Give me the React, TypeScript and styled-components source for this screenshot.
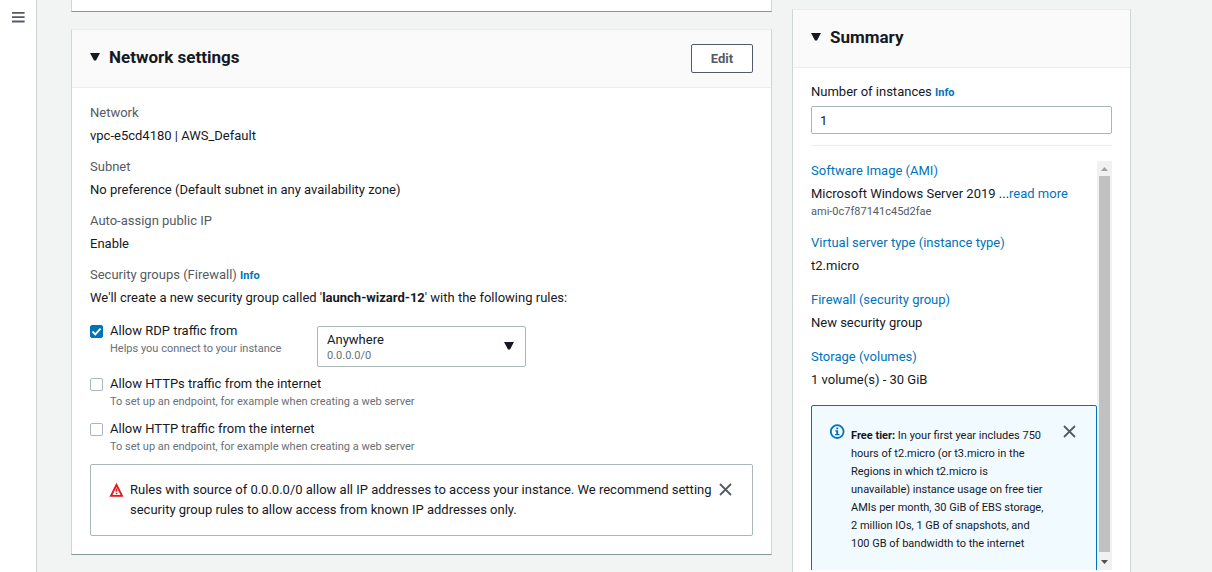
import React, { useState } from "react";
import styled, { createGlobalStyle, css } from "styled-components";

const ink = "#16191f";
const slate = "#545b64";
const muted = "#687078";
const blue = "#0073bb";
const line = "#eaeded";
const control = "#aab7b8";

const GlobalStyle = createGlobalStyle`
  *, *::before, *::after { box-sizing: border-box; }
  body {
    margin: 0;
    background: #f2f3f3;
    color: ${ink};
    font-family: Roboto, "Noto Sans", sans-serif;
    font-size: 13px;
    line-height: 20px;
  }
  h2, p, dl, dd, dt { margin: 0; }
  button, input, select { font: inherit; color: inherit; }
`;

const Page = styled.div`
  display: flex;
  height: 100vh;
  overflow: hidden;
`;

const Rail = styled.nav`
  flex: none;
  width: 37px;
  padding: 10px 0 0 11px;
  background: #fff;
  border-right: 1px solid #d0d4d6;
`;

const IconButton = styled.button`
  display: flex;
  flex: none;
  align-self: flex-start;
  padding: 0;
  border: 0;
  background: none;
  color: ${slate};
  cursor: pointer;
`;

const DismissButton = styled(IconButton)`
  margin-top: 3px;
`;

const Content = styled.main`
  flex: 1;
  display: grid;
  grid-template-columns: minmax(0, 701fr) minmax(0, 339fr);
  column-gap: 20px;
  padding: 0 81px 0 34px;
`;

const Column = styled.div`
  display: flex;
  flex-direction: column;
  gap: 17px;
`;

const Card = styled.section`
  background: #fff;
  border: 1px solid #d0d5d6;
  border-top-color: ${line};
  border-bottom-color: #879596;
`;

const PreviousCard = styled(Card)`
  height: 12px;
  border-top: 0;
`;

const SummaryCard = styled(Card)`
  display: flex;
  flex-direction: column;
  min-height: 0;
  margin-top: 9px;
  border-bottom: 0;
`;

const CardHeader = styled.header`
  display: flex;
  align-items: center;
  justify-content: space-between;
  height: 58px;
  flex: none;
  padding: 0 18px;
  background: #fafafa;
  border-bottom: 1px solid ${line};
`;

const Heading = styled.div`
  display: flex;
  align-items: center;
  gap: 9px;
  padding-bottom: 3px;
`;

const Title = styled.h2`
  font-size: 17px;
  line-height: 22px;
  font-weight: 700;
`;

const OutlineButton = styled.button`
  height: 29px;
  width: 62px;
  padding: 0;
  border: 1px solid ${slate};
  border-radius: 2px;
  background: #fff;
  color: ${slate};
  font-weight: 700;
  cursor: pointer;
`;

const CardBody = styled.div`
  padding: 15px 18px 18px;
`;

const SummaryBody = styled.div`
  display: flex;
  flex: 1;
  flex-direction: column;
  min-height: 0;
  padding: 14px 18px 2px;
`;

const Details = styled.dl<{ $gap: number }>`
  display: flex;
  flex-direction: column;
  gap: ${(p) => p.$gap}px;
`;

const Term = styled.dt`
  margin-bottom: 3px;
  color: ${slate};
`;

const Small = styled.span<{ $color?: string }>`
  display: block;
  font-size: 11px;
  line-height: 15px;
  color: ${(p) => p.$color ?? muted};
`;

const Link = styled.a`
  color: ${blue};
  text-decoration: none;
`;

const InfoLink = styled(Link)`
  font-size: 11px;
  line-height: 11px;
  font-weight: 700;
`;

const Rules = styled.div`
  display: flex;
  flex-direction: column;
  gap: 7px;
  margin: 13px 0 7px;
`;

const Rule = styled.div`
  display: flex;
  min-height: 38px;
`;

const RuleLabel = styled.label`
  display: flex;
  gap: 7px;
  min-width: 227px;
`;

const Tick = styled.span`
  display: grid;
  flex: none;
  height: 13px;
  margin-top: 4px;
  > * { grid-area: 1 / 1; }
  > svg { pointer-events: none; }
`;

const TickInput = styled.input`
  appearance: none;
  width: 13px;
  height: 13px;
  margin: 0;
  border: 1px solid ${control};
  border-radius: 2px;
  background: #fff;
  &:checked {
    border-color: ${blue};
    background: ${blue};
  }
`;

const Picker = styled.div`
  position: relative;
  width: 209px;
  margin-top: 5px;
  > svg {
    position: absolute;
    top: 16px;
    right: 12px;
    pointer-events: none;
  }
`;

const PickerSelect = styled.select`
  display: block;
  appearance: none;
  width: 100%;
  height: 41px;
  padding: 0 32px 14px 9px;
  border: 1px solid ${control};
  border-radius: 2px;
  background: #fff;
`;

const PickerNote = styled(Small)`
  position: absolute;
  left: 10px;
  bottom: 4px;
  pointer-events: none;
`;

const alertTone = {
  plain: css`
    padding: 15px 20px 15px 18px;
    border: 1px solid ${control};
    background: #fff;
  `,
  info: css`
    padding: 16px 20px 19px 18px;
    border: 1px solid ${blue};
    background: #f1faff;
    font-size: 11px;
    line-height: 18px;
  `,
};

const Alert = styled.div<{ $tone: keyof typeof alertTone }>`
  display: flex;
  gap: 6px;
  border-radius: 2px;
  ${(p) => alertTone[p.$tone]}
  > svg { flex: none; }
`;

const AlertText = styled.p`
  flex: 1;
`;

const FreeTierText = styled(AlertText)`
  padding: 5px 12px 0 0;
`;

const NumberInput = styled.input`
  display: block;
  width: 100%;
  height: 28px;
  margin-top: 4px;
  padding: 0 8px;
  border: 1px solid ${control};
  border-radius: 2px;
  background: #fff;
`;

const Divider = styled.hr`
  width: 100%;
  margin: 11px 0 15px;
  border: 0;
  border-top: 1px solid ${line};
`;

const ScrollRegion = styled.div`
  display: flex;
  flex: 1;
  min-height: 0;
`;

const ScrollContent = styled.div`
  flex: 1;
  min-width: 0;
  overflow: hidden;
`;

const FreeTier = styled(Alert)`
  margin-top: 15px;
  min-height: 200px;
`;

const ScrollBar = styled.div`
  display: flex;
  flex-direction: column;
  flex: none;
  width: 15px;
  background: #f1f1f1;
`;

const ScrollThumb = styled.div`
  flex: 1;
  margin: 0 2px 3px;
  background: #c1c1c1;
`;

const Caret = () => (
  <svg width="10" height="8" viewBox="0 0 10 8" aria-hidden="true">
    <path d="M0 0H10L6 7.6H4Z" fill={ink} />
  </svg>
);

const Menu = () => (
  <svg width="14" height="14" viewBox="0 0 14 14" aria-hidden="true">
    <path d="M1 2.9H13.6M1 7.1H13.6M1 11.5H13.6" stroke={slate} strokeWidth="1.9" />
  </svg>
);

const Close = () => (
  <svg width="13" height="13" viewBox="0 0 13 13" aria-hidden="true">
    <path d="M1 1L12 12M12 1L1 12" stroke={slate} strokeWidth="1.8" />
  </svg>
);

const Warning = () => (
  <svg width="15" height="20" viewBox="0 0 15 20" aria-hidden="true">
    <path d="M7.5 4.8L13 15.9H2Z" fill="none" stroke="#e8151b" strokeWidth="1.9" />
    <path d="M7.5 8.4V11.8M7.5 12.8V14.2" stroke="#e8151b" strokeWidth="1.6" />
  </svg>
);

const InfoMark = () => (
  <svg width="15" height="20" viewBox="0 0 15 20" aria-hidden="true">
    <circle cx="7.2" cy="9.6" r="6.4" fill="none" stroke={blue} strokeWidth="1.8" />
    <path d="M6.3 5.6H8.2V7.2H6.3ZM5.2 8.3H8.2V11.9H9.5V13.3H5V11.9H6.3V9.6H5.2Z" fill={blue} />
  </svg>
);

const ScrollArrow = ({ up, color }: { up?: boolean; color: string }) => (
  <svg width="15" height="15" viewBox="0 0 15 15" aria-hidden="true">
    <path d={up ? "M4 10H11L7.5 6Z" : "M4 5H11L7.5 9Z"} fill={color} />
  </svg>
);

type TrafficRuleProps = {
  label: string;
  hint: string;
  initial?: boolean;
  children?: React.ReactNode;
};

function TrafficRule({ label, hint, initial = false, children }: TrafficRuleProps) {
  const [on, setOn] = useState(initial);
  return (
    <Rule>
      <RuleLabel>
        <Tick>
          <TickInput type="checkbox" checked={on} onChange={() => setOn(!on)} />
          {on && (
            <svg width="13" height="13" viewBox="0 0 13 13" aria-hidden="true">
              <path d="M2.5 6.5L5.3 9.3L10.6 3.6" fill="none" stroke="#fff" strokeWidth="1.9" />
            </svg>
          )}
        </Tick>
        <span>
          {label}
          <Small>{hint}</Small>
        </span>
      </RuleLabel>
      {children}
    </Rule>
  );
}

const network = [
  ["Network", "vpc-e5cd4180 | AWS_Default"],
  ["Subnet", "No preference (Default subnet in any availability zone)"],
  ["Auto-assign public IP", "Enable"],
];

const summary = [
  ["Virtual server type (instance type)", "t2.micro"],
  ["Firewall (security group)", "New security group"],
  ["Storage (volumes)", "1 volume(s) - 30 GiB"],
];

export default function App() {
  const [count, setCount] = useState("1");
  return (
    <>
      <GlobalStyle />
      <Page>
        <Rail>
          <IconButton aria-label="Open navigation"><Menu /></IconButton>
        </Rail>
        <Content>
          <Column>
            <PreviousCard />
            <Card>
              <CardHeader>
                <Heading>
                  <Caret />
                  <Title>Network settings</Title>
                </Heading>
                <OutlineButton>Edit</OutlineButton>
              </CardHeader>
              <CardBody>
                <Details $gap={11}>
                  {network.map(([term, value]) => (
                    <div key={term}>
                      <Term>{term}</Term>
                      <dd>{value}</dd>
                    </div>
                  ))}
                  <div>
                    <Term>Security groups (Firewall) <InfoLink href="#security">Info</InfoLink></Term>
                    <dd>
                      We'll create a new security group called '<b>launch-wizard-12</b>' with the following rules:
                    </dd>
                  </div>
                </Details>
                <Rules>
                  <TrafficRule label="Allow RDP traffic from" hint="Helps you connect to your instance" initial>
                    <Picker>
                      <PickerSelect aria-label="Source">
                        <option>Anywhere</option>
                      </PickerSelect>
                      <PickerNote>0.0.0.0/0</PickerNote>
                      <Caret />
                    </Picker>
                  </TrafficRule>
                  <TrafficRule
                    label="Allow HTTPs traffic from the internet"
                    hint="To set up an endpoint, for example when creating a web server"
                  />
                  <TrafficRule
                    label="Allow HTTP traffic from the internet"
                    hint="To set up an endpoint, for example when creating a web server"
                  />
                </Rules>
                <Alert $tone="plain">
                  <Warning />
                  <AlertText>
                    Rules with source of 0.0.0.0/0 allow all IP addresses to access your instance. We recommend setting
                    security group rules to allow access from known IP addresses only.
                  </AlertText>
                  <DismissButton aria-label="Dismiss warning"><Close /></DismissButton>
                </Alert>
              </CardBody>
            </Card>
          </Column>
          <SummaryCard>
            <CardHeader>
              <Heading>
                <Caret />
                <Title>Summary</Title>
              </Heading>
            </CardHeader>
            <SummaryBody>
              <div>
                <label htmlFor="instances">Number of instances</label>{" "}
                <InfoLink href="#instances">Info</InfoLink>
              </div>
              <NumberInput id="instances" inputMode="numeric" value={count} onChange={(e) => setCount(e.target.value)} />
              <Divider />
              <ScrollRegion>
                <ScrollContent>
                  <Details $gap={14}>
                    <div>
                      <Term><Link href="#ami">Software Image (AMI)</Link></Term>
                      <dd>
                        Microsoft Windows Server 2019 ...<Link href="#more">read more</Link>
                        <Small $color={slate}>ami-0c7f87141c45d2fae</Small>
                      </dd>
                    </div>
                    {summary.map(([term, value]) => (
                      <div key={term}>
                        <Term><Link href="#details">{term}</Link></Term>
                        <dd>{value}</dd>
                      </div>
                    ))}
                  </Details>
                  <FreeTier $tone="info">
                    <InfoMark />
                    <FreeTierText>
                      <b>Free tier:</b> In your first year includes 750 hours of t2.micro (or t3.micro in the Regions in
                      which t2.micro is unavailable) instance usage on free tier AMIs per month, 30 GiB of EBS storage,
                      2 million IOs, 1 GB of snapshots, and 100 GB of bandwidth to the internet
                    </FreeTierText>
                    <DismissButton aria-label="Dismiss free tier notice"><Close /></DismissButton>
                  </FreeTier>
                </ScrollContent>
                <ScrollBar aria-hidden="true">
                  <ScrollArrow up color="#a3a3a3" />
                  <ScrollThumb />
                  <ScrollArrow color="#505050" />
                </ScrollBar>
              </ScrollRegion>
            </SummaryBody>
          </SummaryCard>
        </Content>
      </Page>
    </>
  );
}
